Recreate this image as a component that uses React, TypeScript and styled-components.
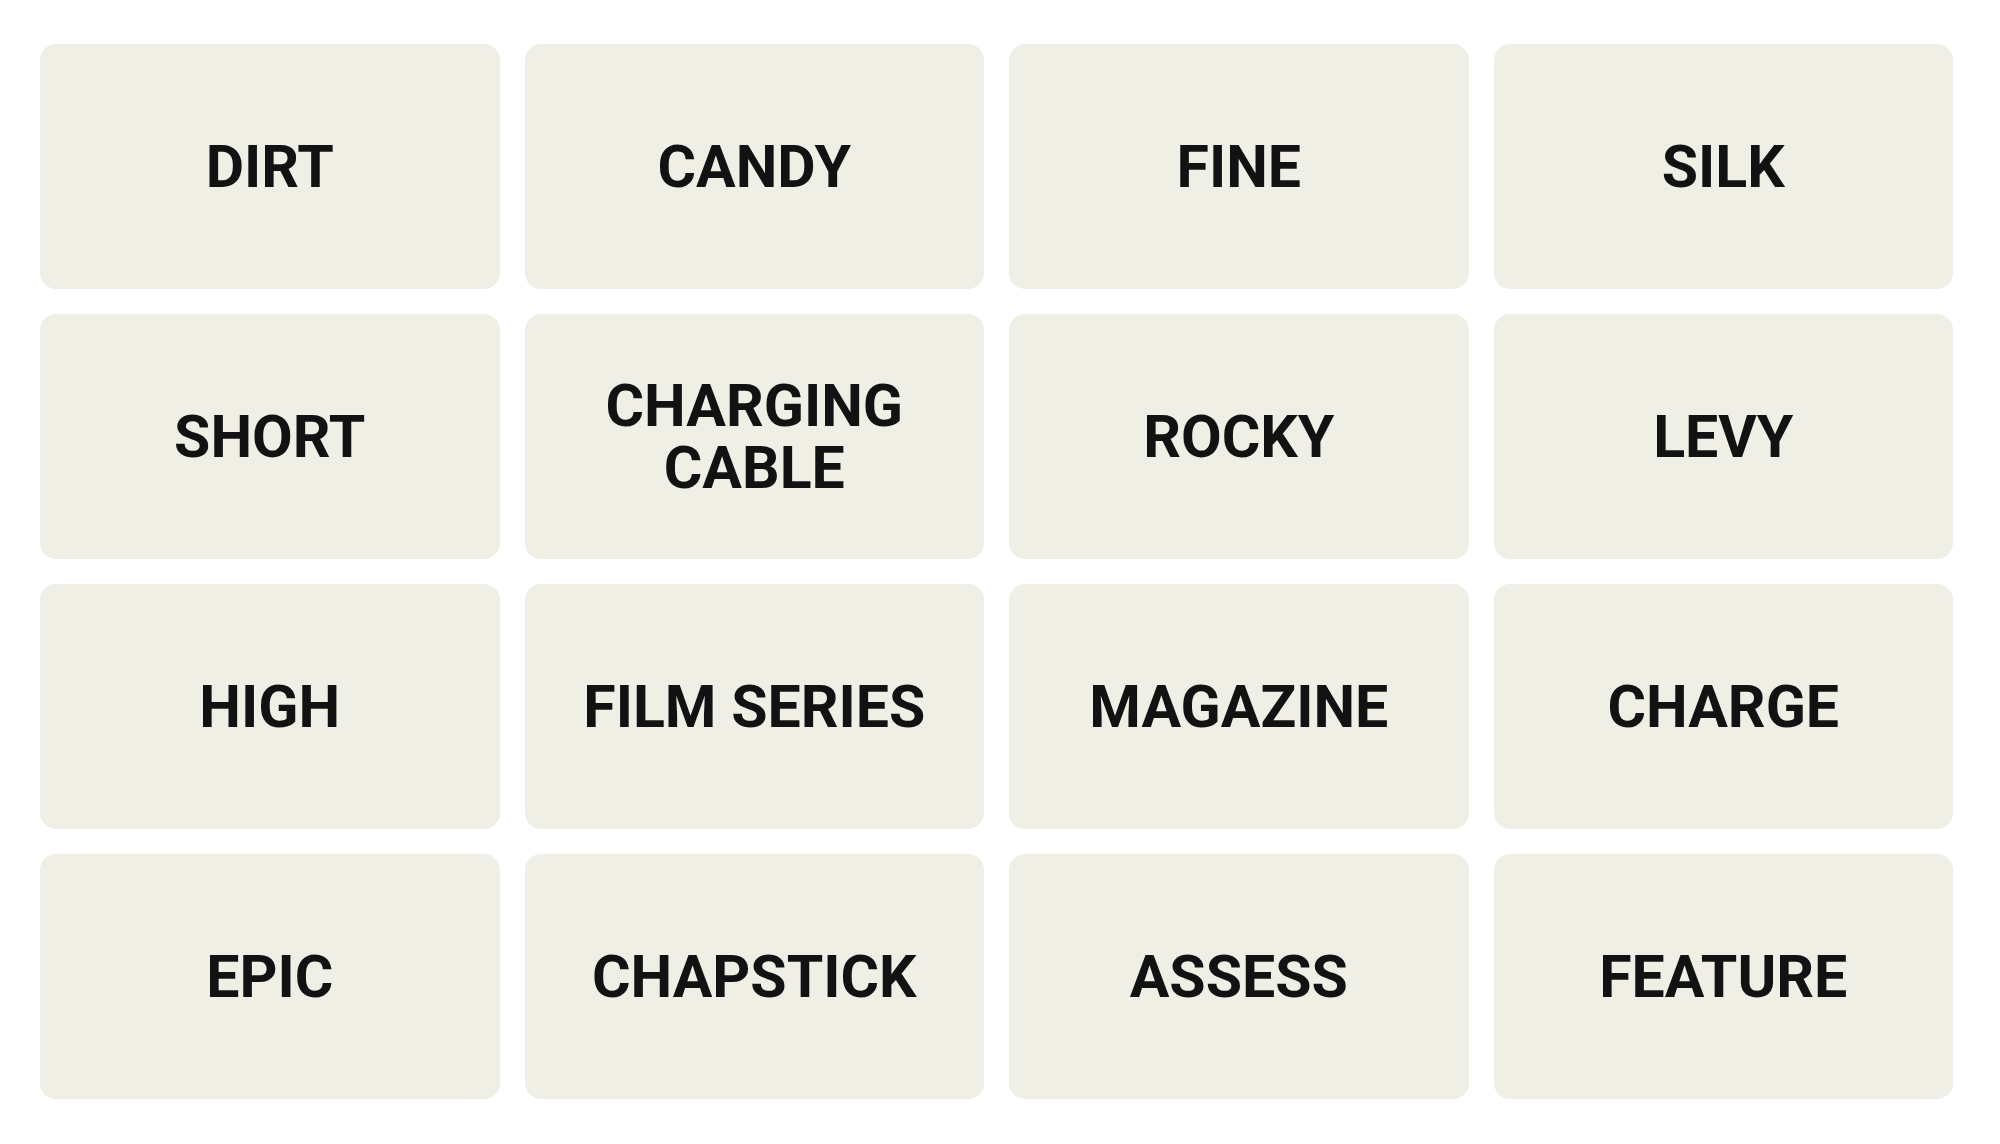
import React from "react";
import { createGlobalStyle, styled } from "styled-components";

const words = [
  "DIRT",
  "CANDY",
  "FINE",
  "SILK",
  "SHORT",
  "CHARGING CABLE",
  "ROCKY",
  "LEVY",
  "HIGH",
  "FILM SERIES",
  "MAGAZINE",
  "CHARGE",
  "EPIC",
  "CHAPSTICK",
  "ASSESS",
  "FEATURE",
];

// long two-word cards wrap onto two lines
const wrapped = ["CHARGING CABLE"];

const App = () => {
  return (
    <>
      <GlobalStyle />
      <S.Page>
        <S.Board>
          {words.map((word) => (
            <S.Card key={word} $wrap={wrapped.includes(word)}>
              {word}
            </S.Card>
          ))}
        </S.Board>
      </S.Page>
    </>
  );
};

export default App;

const GlobalStyle = createGlobalStyle`
  html, body {
    margin: 0;
    padding: 0;
    background: #ffffff;
  }
  body {
    font-family: Roboto, "Liberation Sans", Arial, sans-serif;
  }
`;

const S = {
  Page: styled.main`
    width: 2000px;
    height: 1144px;
    padding: 44px 0 0 40px;
    box-sizing: border-box;
  `,
  Board: styled.div`
    width: 1913px;
    display: grid;
    grid-template-columns: repeat(4, minmax(0, 1fr));
    grid-auto-rows: 245px;
    gap: 25px;
  `,
  Card: styled.button<{ $wrap?: boolean }>`
    all: unset;
    min-width: 0;
    display: flex;
    align-items: center;
    justify-content: center;
    text-align: center;
    background-color: #efefe6;
    border-radius: 16px;
    color: #121212;
    font-family: Roboto, "Liberation Sans", Arial, sans-serif;
    font-weight: 700;
    font-size: 59px;
    line-height: 62px;
    padding: 0 ${(p) => (p.$wrap ? "90px" : "20px")};
    box-sizing: border-box;
    cursor: pointer;
    user-select: none;
  `,
};
